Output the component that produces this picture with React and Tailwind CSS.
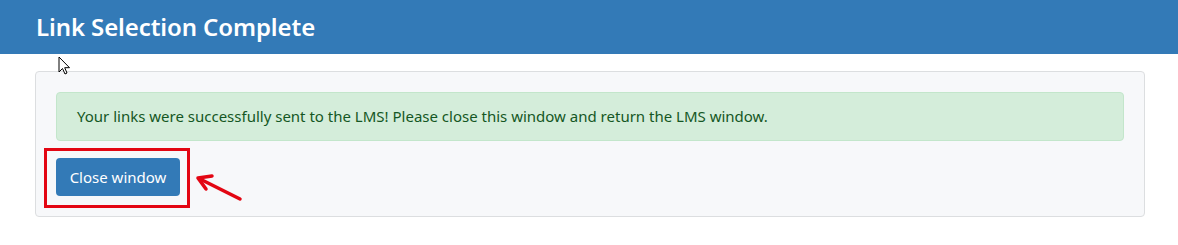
import React from "react";

export default function App() {
  return (
    <div className="w-[1178px] h-[245px] bg-white relative overflow-hidden" style={{ fontFamily: '"Noto Sans", "Open Sans", sans-serif' }}>
      <div className="h-[54px] bg-[#337ab7] flex items-center pl-[36px]">
        <h1 className="text-white text-[24px] font-semibold leading-none tracking-[-0.1px]">Link Selection Complete</h1>
      </div>
      <div className="px-[35px] pt-[17px]">
        <div className="w-[1110px] border border-[#dcdee0] rounded bg-[#f7f8fa] p-[20px]">
          <div className="h-[49px] border border-[#c3e6cb] rounded bg-[#d4edda] flex items-center pl-[20px] text-[#155724] text-[15px]">
            Your links were successfully sent to the LMS! Please close this window and return the LMS window.
          </div>
          <div className="mt-[17px] relative w-fit">
            <button className="h-[38px] w-[124px] rounded bg-[#337ab7] text-white text-[15px]">Close window</button>
            <div className="absolute left-[-12px] top-[-10px] w-[146px] h-[60px] border-[3px] border-[#e30613] pointer-events-none" />
          </div>
        </div>
      </div>
      <svg className="absolute left-[192px] top-[170px]" width="54" height="34" viewBox="0 0 54 34">
        <line x1="48" y1="29" x2="10" y2="10" stroke="#e30613" strokeWidth="3.5" strokeLinecap="round" />
        <polyline points="20,6 6,8 14,19" fill="none" stroke="#e30613" strokeWidth="3.5" strokeLinecap="round" strokeLinejoin="round" />
      </svg>
      <svg className="absolute left-[58px] top-[56px]" width="14" height="20" viewBox="0 0 14 20">
        <path d="M1 1 L1 16 L4.5 12.5 L7 18 L9 17 L6.7 11.7 L11.5 11.7 Z" fill="white" stroke="black" strokeWidth="1" strokeLinejoin="round" />
      </svg>
    </div>
  );
}
